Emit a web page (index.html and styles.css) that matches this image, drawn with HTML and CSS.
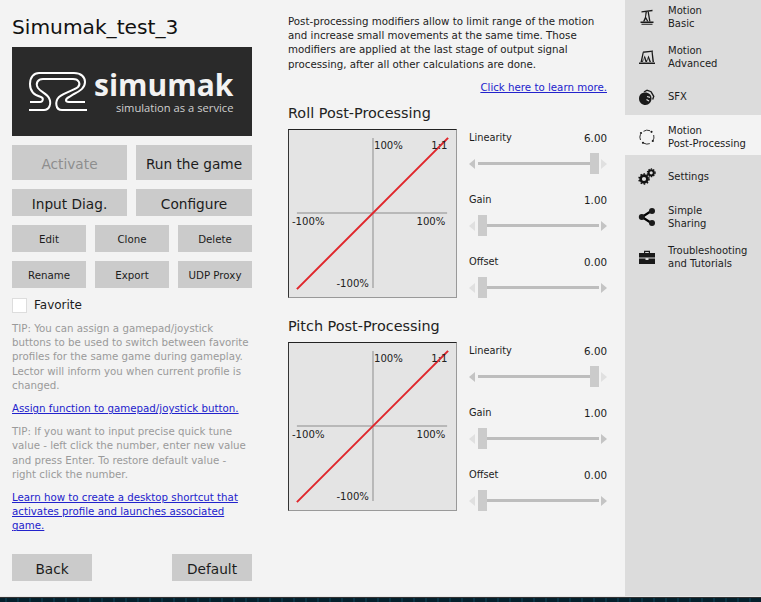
FILE: index.html
```html
<!DOCTYPE html>
<html lang="en">
<head>
<meta charset="utf-8">
<title>Simumak_test_3</title>
<link rel="stylesheet" href="styles.css">
</head>
<body>
<div class="app">
  <aside class="profile">
    <h1 class="title">Simumak_test_3</h1>
    <div class="logo">
      <svg class="logo-mark" width="62" height="44" viewBox="0 0 62 44" fill="none" stroke="#fff" stroke-width="2">
        <path d="M2 40H17C22 40 25 34 22 28 20 24 14 22 11 18 8 13 11 9 16 9H46C52 9 54 14 51 17 48 20 38 22 32 27 28 31 28 40 35 40H60"/>
        <path d="M3 32H13C16 32 17 28 14 27 6 25 3 20 3 14 3 7 7 3 12 3H47C54 3 58 7 58 12 58 18 53 21 47 24L42 27C38 29 38 32 42 32H58"/>
      </svg>
      <div class="logo-words">
        <span class="logo-name">simumak</span>
        <span class="logo-sub">simulation as a service</span>
      </div>
    </div>
    <div class="btn-row two tall">
      <button class="btn big disabled">Activate</button>
      <button class="btn big">Run the game</button>
    </div>
    <div class="btn-row two">
      <button class="btn big">Input Diag.</button>
      <button class="btn big">Configure</button>
    </div>
    <div class="btn-row three">
      <button class="btn">Edit</button>
      <button class="btn">Clone</button>
      <button class="btn">Delete</button>
    </div>
    <div class="btn-row three">
      <button class="btn">Rename</button>
      <button class="btn">Export</button>
      <button class="btn">UDP Proxy</button>
    </div>
    <label class="favorite"><span class="check"></span>Favorite</label>
    <p class="tip first">TIP: You can assign a gamepad/joystick buttons to be used to switch between favorite profiles for the same game during gameplay. Lector will inform you when current profile is changed.</p>
    <a class="link block" href="#">Assign function to gamepad/joystick button.</a>
    <p class="tip">TIP: If you want to input precise quick tune value - left click the number, enter new value and press Enter. To restore default value - right click the number.</p>
    <a class="link block" href="#">Learn how to create a desktop shortcut that activates profile and launches associated game.</a>
    <div class="footer-btns">
      <button class="btn big foot">Back</button>
      <button class="btn big foot">Default</button>
    </div>
  </aside>

  <main class="content">
    <p class="intro">Post-processing modifiers allow to limit range of the motion and increase small movements at the same time. Those modifiers are applied at the last stage of output signal processing, after all other calculations are done.</p>
    <div class="learn"><a class="link" href="#">Click here to learn more.</a></div>

    <section class="pp">
      <h2 class="pp-title">Roll Post-Processing</h2>
      <div class="pp-body">
        <svg class="chart" width="169" height="169" viewBox="0 0 169 169">
          <line class="axis" x1="85" y1="8" x2="85" y2="160"/>
          <line class="axis" x1="8" y1="84" x2="160" y2="84"/>
          <line class="curve" x1="8" y1="161" x2="161" y2="8"/>
          <text x="86" y="19">100%</text>
          <text x="144" y="19">1:1</text>
          <text x="3" y="96">-100%</text>
          <text x="129" y="96">100%</text>
          <text x="48" y="159">-100%</text>
        </svg>
        <div class="sliders">
          <div class="slider-block">
            <div class="slider-head"><span>Linearity</span><span class="val">6.00</span></div>
            <div class="slider at-max"><i class="arrow left"></i><span class="track"><b class="thumb"></b></span><i class="arrow right"></i></div>
          </div>
          <div class="slider-block">
            <div class="slider-head"><span>Gain</span><span class="val">1.00</span></div>
            <div class="slider"><i class="arrow left"></i><span class="track"><b class="thumb"></b></span><i class="arrow right"></i></div>
          </div>
          <div class="slider-block">
            <div class="slider-head"><span>Offset</span><span class="val">0.00</span></div>
            <div class="slider"><i class="arrow left"></i><span class="track"><b class="thumb"></b></span><i class="arrow right"></i></div>
          </div>
        </div>
      </div>
    </section>

    <section class="pp second">
      <h2 class="pp-title">Pitch Post-Processing</h2>
      <div class="pp-body">
        <svg class="chart" width="169" height="169" viewBox="0 0 169 169">
          <line class="axis" x1="85" y1="8" x2="85" y2="160"/>
          <line class="axis" x1="8" y1="84" x2="160" y2="84"/>
          <line class="curve" x1="8" y1="161" x2="161" y2="8"/>
          <text x="86" y="19">100%</text>
          <text x="144" y="19">1:1</text>
          <text x="3" y="96">-100%</text>
          <text x="129" y="96">100%</text>
          <text x="48" y="159">-100%</text>
        </svg>
        <div class="sliders">
          <div class="slider-block">
            <div class="slider-head"><span>Linearity</span><span class="val">6.00</span></div>
            <div class="slider at-max"><i class="arrow left"></i><span class="track"><b class="thumb"></b></span><i class="arrow right"></i></div>
          </div>
          <div class="slider-block">
            <div class="slider-head"><span>Gain</span><span class="val">1.00</span></div>
            <div class="slider"><i class="arrow left"></i><span class="track"><b class="thumb"></b></span><i class="arrow right"></i></div>
          </div>
          <div class="slider-block">
            <div class="slider-head"><span>Offset</span><span class="val">0.00</span></div>
            <div class="slider"><i class="arrow left"></i><span class="track"><b class="thumb"></b></span><i class="arrow right"></i></div>
          </div>
        </div>
      </div>
    </section>
  </main>

  <nav class="nav">
    <a class="nav-item"><svg class="ico" width="18" height="18" viewBox="0 0 18 18"><path d="M3.500 3.200 14.500 1.800v1.400L3.500 4.600z"/><path d="M2.500 13.500h13V15h-13zM3.500 15.800h11v1h-11z"/><path d="M7.500 4h1.400L8 9l2.500 4.500H9L7.800 11 6.500 13.500H5L7 9zM9.500 3.500h1.300l1.700 10h-1.300z"/></svg><span>Motion<br>Basic</span></a>
    <a class="nav-item"><svg class="ico" width="18" height="18" viewBox="0 0 18 18"><path d="M5 3.500 15 2.500v1.300L4.500 5z"/><path d="M1 14.500h16V16H1z"/><path d="M4.500 5h1.200L4 14H2.500zM6.800 7.500 9 14H7.500L6 9.500 5 14H4zM10.500 7.500 13 14h-1.500L10 10l-1 4H8zM13.500 4h1.200L16 14h-1.500z"/></svg><span>Motion<br>Advanced</span></a>
    <a class="nav-item"><svg class="ico" width="18" height="18" viewBox="0 0 18 18"><path d="M7 4.500c4 0 6.500 2.500 6.500 6S11 17 7.500 17 1 14.500 1 10.500 4 4.500 7 4.500z"/><path d="M5.500 3.500 9 1.500l4.500 1.800 3 5-1.200 3.500-1.300-.5 1-2.800-2.600-4.400L9 2.900 6.800 4.200z"/><path d="M9 8.500l3 .8M8.500 11.500l2.500 1.500" stroke="#dcdcdc" stroke-width="1.200"/></svg><span>SFX</span></a>
    <a class="nav-item active"><svg class="ico" width="18" height="18" viewBox="0 0 18 18"><g fill="none" stroke="#333" stroke-width="1"><path d="M5.500 3.300A7 7 0 0 1 12 2.700"/><path d="M15.700 7a7 7 0 0 1-1 6"/><path d="M11.800 15.600a7 7 0 0 1-6-.4"/><path d="M2.500 12a7 7 0 0 1 0-5.800"/></g><circle cx="13.500" cy="3.800" r="1.100"/><circle cx="14.800" cy="13" r="1.100"/><circle cx="5" cy="14.800" r="1.100"/><circle cx="3" cy="5" r="1.100"/></svg><span>Motion<br>Post-Processing</span></a>
    <a class="nav-item"><svg class="ico" width="18" height="18" viewBox="0 0 18 18"><g fill="none" stroke="#111"><circle cx="6" cy="11" r="3.400" stroke-width="2.600"/><circle cx="13.200" cy="4.800" r="2.600" stroke-width="2"/><circle cx="6" cy="11" r="5" stroke-width="1.500" stroke-dasharray="1.600 1.600"/><circle cx="13.200" cy="4.800" r="3.900" stroke-width="1.200" stroke-dasharray="1.300 1.200"/></g></svg><span>Settings</span></a>
    <a class="nav-item"><svg class="ico" width="18" height="18" viewBox="0 0 18 18"><path d="M14 2.500 4 9l10 6.500" fill="none" stroke="#000" stroke-width="2.200"/><circle cx="14" cy="3" r="3"/><circle cx="3.800" cy="9" r="3"/><circle cx="14" cy="15" r="3"/></svg><span>Simple<br>Sharing</span></a>
    <a class="nav-item"><svg class="ico" width="18" height="18" viewBox="0 0 18 18"><path d="M6 5V2.800h6V5h-1.200V4H7.200v1z"/><path d="M1 5h16v4.500H1zM1 10.500h6.500V12h3v-1.500H17V16H1z"/></svg><span>Troubleshooting<br>and Tutorials</span></a>
  </nav>
</div>
<div class="desktop"></div>
</body>
</html>
```

FILE: styles.css
```css
* { box-sizing: border-box; }
html, body { margin: 0; height: 100%; overflow: hidden; }
body {
  display: flex;
  flex-direction: column;
  background: #03131c;
  font-family: "DejaVu Sans", sans-serif;
  color: #1c1c1c;
  font-size: 10.25px;
}
.app { display: flex; height: 597px; background: #f3f3f3; border-bottom: 1px solid #e8e8e8; overflow: hidden; }
.desktop {
  flex: 1;
  background: repeating-linear-gradient(90deg, #04202c 0 5px, #0a3343 5px 7px, #04202c 7px 12px);
  border-top: 1px solid #333;
}

/* left */
.profile { width: 270px; flex: none; padding: 0 18px 0 12px; display: flex; flex-direction: column; }
.title { font-size: 20.2px; font-weight: 400; margin: 16px 0 0; line-height: 23px; height: 31px; color: #111; }
.logo { height: 89px; background: #2a2a2a; display: flex; align-items: center; padding-left: 15px; gap: 5px; margin-bottom: 9px; }
.logo-mark { flex: none; }
.logo-words { display: flex; flex-direction: column; align-items: flex-end; color: #f2f2f2; font-family: "Open Sans", sans-serif; }
.logo-name { font-size: 30px; font-weight: 700; line-height: 32px; }
.logo-sub { font-size: 11.2px; line-height: 13px; color: #cfcfcf; }
.btn-row { display: grid; gap: 9px; margin-bottom: 9px; height: 27px; }
.btn-row.tall { height: 35px; }
.two { grid-template-columns: 115px 116px; }
.three { grid-template-columns: repeat(3, 74px); }
.btn {
  border: 0;
  background: #cbcbcb;
  font-family: inherit;
  font-size: 10.25px;
  color: #1c1c1c;
  padding: 0;
}
.btn.big { font-size: 13.7px; padding-top: 2px; }
.btn.disabled { color: #8e8e8e; }
.favorite { display: flex; align-items: center; gap: 7px; font-size: 12px; height: 16px; }
.check { width: 15px; height: 15px; background: #fff; border: 1px solid #ddd; }
.tip { margin: 0; color: #9a9a9a; font-size: 10.25px; line-height: 14.2px; }
.tip.first { margin-top: 8px; }
.link { color: #2222cc; text-decoration: underline; font-size: 10.25px; line-height: 14.2px; }
.link.block { display: block; }
.profile .link.block { margin: 9px 0; }
.footer-btns { display: flex; justify-content: space-between; margin-top: auto; margin-bottom: 15px; }
.foot { width: 80px; height: 27px; }

/* middle */
.content { flex: 1; padding: 14px 18px 0 18px; }
.intro { margin: 0; font-size: 10.25px; line-height: 14.2px; color: #222; }
.learn { text-align: right; margin-top: 9px; height: 14px; }
.pp { margin-top: 11px; }
.pp.second { margin-top: 13px; }
.pp-title { font-size: 14.4px; font-weight: 400; margin: 0 0 7px; line-height: 17px; color: #222; }
.pp-body { display: flex; gap: 12px; }
.chart {
  flex: none;
  background: #e4e4e4;
  border-top: 1px solid #222;
  border-left: 1px solid #333;
  border-right: 1px solid #999;
  border-bottom: 1px solid #999;
}
.chart text { font-family: "DejaVu Sans", sans-serif; font-size: 10.25px; fill: #222; }
.axis { stroke: #b8b8b8; stroke-width: 2; }
.curve { stroke: #e0262b; stroke-width: 2; }
.sliders { flex: 1; display: flex; flex-direction: column; gap: 12px; padding-top: 2px; }
.slider-block { height: 50px; }
.slider-head { display: flex; justify-content: space-between; align-items: center; font-size: 9.8px; line-height: 14px; height: 14px; }
.val { font-size: 10.3px; }
.slider { display: flex; align-items: center; height: 22px; margin-top: 8px; }
.arrow { width: 0; height: 0; border-top: 5.5px solid transparent; border-bottom: 5.5px solid transparent; flex: none; }
.arrow.left { border-right: 6px solid #e0e0e0; margin-right: 3px; }
.arrow.right { border-left: 6px solid #c4c4c4; margin-left: 2px; }
.at-max .arrow.left { border-right-color: #c4c4c4; }
.at-max .arrow.right { border-left-color: #e0e0e0; }
.track { flex: 1; height: 3px; background: #bdbdbd; position: relative; display: block; }
.thumb { position: absolute; left: 0; top: -9px; width: 9px; height: 21px; background: #cbcbcb; }
.at-max .thumb { left: auto; right: 0; }

/* nav */
.nav { width: 136px; flex: none; background: #dcdcdc; margin-top: -5px; display: flex; flex-direction: column; }
.nav-item { height: 40px; flex: none; display: flex; align-items: center; gap: 12px; padding: 4px 0 0 13px; line-height: 13.3px; font-size: 10px; color: #1c1c1c; }
.nav-item.active { background: #f3f3f3; }
.ico { flex: none; fill: #1a1a1a; }
```
